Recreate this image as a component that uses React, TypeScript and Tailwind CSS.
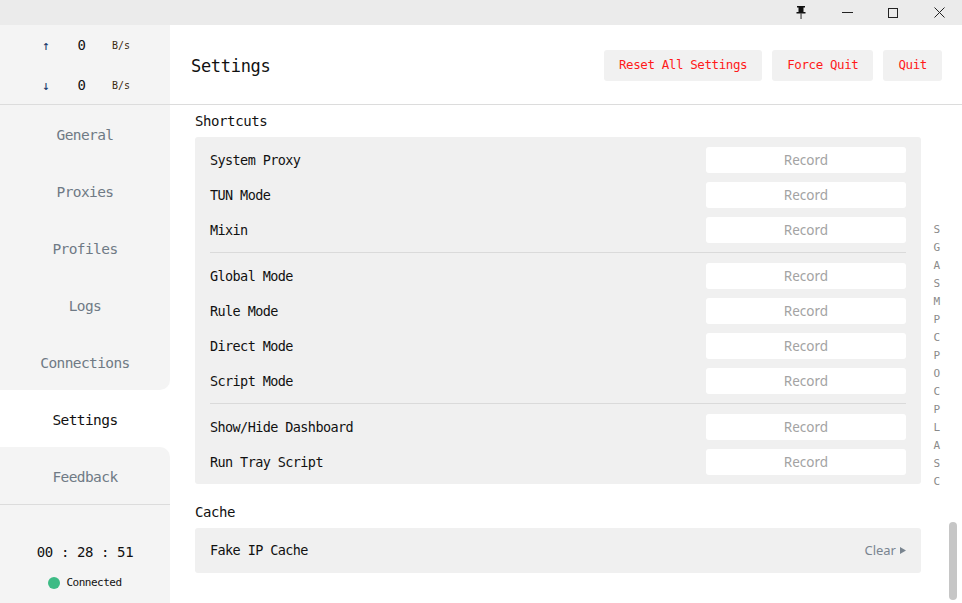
import React from "react";

const mono = { fontFamily: '"DejaVu Sans Mono", "Liberation Mono", monospace' };
const sans = { fontFamily: '"Noto Sans", "Open Sans", sans-serif' };

const navItems = ["General", "Proxies", "Profiles", "Logs", "Connections", "Settings", "Feedback"];
const activeIdx = 5;

const groups = [
  ["System Proxy", "TUN Mode", "Mixin"],
  ["Global Mode", "Rule Mode", "Direct Mode", "Script Mode"],
  ["Show/Hide Dashboard", "Run Tray Script"],
];

const letters = ["S", "G", "A", "S", "M", "P", "C", "P", "O", "C", "P", "L", "A", "S", "C"];

function Row({ label }: { label: string }) {
  return (
    <div className="flex items-center justify-between h-[26px]">
      <span className="text-[13.5px] tracking-[-0.6px] text-[#111] font-medium" style={mono}>
        {label}
      </span>
      <div
        className="w-[200px] h-[26px] bg-white rounded-[3px] flex items-center justify-center text-[13.5px] text-[#a3a3a3]"
        style={sans}
      >
        Record
      </div>
    </div>
  );
}

export default function App() {
  return (
    <div className="w-[962px] h-[603px] flex flex-col overflow-hidden bg-white" style={mono}>
      {/* title bar */}
      <div className="h-[25px] bg-[#ebebeb] flex items-center justify-end shrink-0">
        <div className="w-[46px] h-[25px] flex items-center justify-center">
          <svg width="10" height="14" viewBox="0 0 10 14">
            <rect x="1" y="0" width="8" height="1.5" fill="#111" />
            <rect x="2.5" y="1" width="5" height="5.5" fill="#111" />
            <rect x="0.5" y="6" width="9" height="1.5" fill="#111" />
            <rect x="4.4" y="7" width="1.3" height="6" fill="#555" />
          </svg>
        </div>
        <div className="w-[46px] h-[25px] flex items-center justify-center">
          <div className="w-[11px] h-[1px] bg-[#222]" />
        </div>
        <div className="w-[46px] h-[25px] flex items-center justify-center">
          <div className="w-[10px] h-[10px] border border-[#222]" />
        </div>
        <div className="w-[46px] h-[25px] flex items-center justify-center">
          <svg width="11" height="11" viewBox="0 0 11 11">
            <path d="M0.5 0.5 L10.5 10.5 M10.5 0.5 L0.5 10.5" stroke="#222" strokeWidth="1" />
          </svg>
        </div>
      </div>

      <div className="flex flex-1 min-h-0">
        {/* sidebar */}
        <div className="w-[170px] shrink-0 flex flex-col bg-white">
          <div className="h-[80px] bg-[#f4f4f4] border-b border-[#dcdcdc] flex flex-col justify-center gap-[22px] pt-[2px]">
            <div className="flex items-center h-[18px]">
              <span className="w-[50px] text-right text-[13px] text-[#1a3a6a]">↑</span>
              <span className="w-[36px] text-right text-[14px] text-[#111]">0</span>
              <span className="ml-[26px] text-[10px] text-[#3a2a10]">B/s</span>
            </div>
            <div className="flex items-center h-[18px]">
              <span className="w-[50px] text-right text-[13px] text-[#1a3a6a]">↓</span>
              <span className="w-[36px] text-right text-[14px] text-[#111]">0</span>
              <span className="ml-[26px] text-[10px] text-[#3a2a10]">B/s</span>
            </div>
          </div>
          {navItems.map((n, i) => {
            const active = i === activeIdx;
            const before = i === activeIdx - 1;
            const after = i === activeIdx + 1;
            return (
              <div
                key={n}
                className={
                  "h-[57px] flex items-center justify-center pt-[5px] text-[14.5px] tracking-[-0.6px] " +
                  (active
                    ? "bg-white text-[#111]"
                    : before
                    ? "bg-[#f4f4f4] text-[#6f7a85] rounded-br-[10px]"
                    : after
                    ? "bg-[#f4f4f4] text-[#6f7a85] rounded-tr-[10px]"
                    : "bg-[#f4f4f4] text-[#6f7a85]")
                }
              >
                {n}
              </div>
            );
          })}
          <div className="flex-1 bg-[#f4f4f4] border-t border-[#dcdcdc] flex flex-col items-center pt-[37px]">
            <div className="text-[14px] tracking-[-0.4px] text-[#111]">00 : 28 : 51</div>
            <div className="flex items-center gap-[6px] mt-[12px]">
              <span className="w-[12px] h-[12px] rounded-full bg-[#3dbb85]" />
              <span className="text-[11px] tracking-[-0.5px] text-[#111]">Connected</span>
            </div>
          </div>
        </div>

        {/* main */}
        <div className="flex-1 flex flex-col min-w-0 relative">
          <div className="h-[80px] border-b border-[#dcdcdc] flex items-center justify-between pl-[21px] pr-[20px] shrink-0">
            <div className="text-[17px] tracking-[-0.3px] text-[#111] pt-[5px]">Settings</div>
            <div className="flex items-center gap-[10px] pt-[1px]">
              <div className="h-[31px] px-[15px] bg-[#f1f1f1] rounded-[3px] flex items-center text-[12.5px] tracking-[-0.4px] text-[#ff1a1a]">
                Reset All Settings
              </div>
              <div className="h-[31px] px-[15px] bg-[#f1f1f1] rounded-[3px] flex items-center text-[12.5px] tracking-[-0.4px] text-[#ff1a1a]">
                Force Quit
              </div>
              <div className="h-[31px] px-[15px] bg-[#f1f1f1] rounded-[3px] flex items-center text-[12.5px] tracking-[-0.4px] text-[#ff1a1a]">
                Quit
              </div>
            </div>
          </div>

          <div className="flex-1 pl-[25px] pr-[41px] pt-[6px] relative">
            <div className="h-[20px] flex items-center text-[14px] tracking-[-0.4px] text-[#111] font-medium">Shortcuts</div>
            <div className="mt-[6px] bg-[#f0f0f0] rounded-[3px] px-[15px] pt-[10px] pb-[9px]">
              {groups.map((g, gi) => (
                <div key={gi}>
                  {gi > 0 && <div className="h-[1px] bg-[#dadada] mt-[9px] mb-[10px]" />}
                  <div className="flex flex-col gap-[9px]">
                    {g.map((l) => (
                      <Row key={l} label={l} />
                    ))}
                  </div>
                </div>
              ))}
            </div>

            <div className="mt-[18px] h-[20px] flex items-center text-[14px] tracking-[-0.4px] text-[#111] font-medium">Cache</div>
            <div className="mt-[6px] h-[45px] bg-[#f0f0f0] rounded-[3px] px-[15px] flex items-center justify-between">
              <span className="text-[13.5px] tracking-[-0.6px] text-[#111] font-medium">Fake IP Cache</span>
              <span className="flex items-center gap-[4px] text-[13px] text-[#7a8590]" style={sans}>
                Clear
                <svg width="6" height="7" viewBox="0 0 6 7">
                  <path d="M0 0 L6 3.5 L0 7 Z" fill="#7a8590" />
                </svg>
              </span>
            </div>

            {/* alphabet index */}
            <div className="absolute right-[22px] top-0 bottom-0 flex flex-col justify-center pt-[4px]">
              {letters.map((c, i) => (
                <div key={i} className="h-[18px] flex items-center justify-center text-[11px] text-[#8a8a8a]">
                  {c}
                </div>
              ))}
            </div>

            {/* scrollbar thumb */}
            <div className="absolute right-[5px] top-[417px] w-[8px] h-[78px] rounded-full bg-[#c6c6c6]" />
          </div>
        </div>
      </div>
    </div>
  );
}
